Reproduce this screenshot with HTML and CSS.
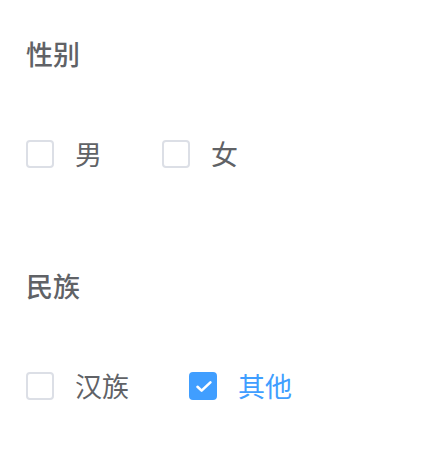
FILE: index.html
```html
<!DOCTYPE html>
<html lang="zh-CN">
<head>
    <meta charset="UTF-8">
    <meta name="viewport" content="width=device-width, initial-scale=1.0">
    <title>表单</title>
    <link rel="stylesheet" href="styles.css">
</head>
<body>
    <div class="form">
        <!-- 性别 -->
        <div class="field">
            <div class="field-title">性别</div>
            <div class="checkbox-group">
                <label class="checkbox">
                    <span class="checkbox-box"></span>
                    <span class="checkbox-label">男</span>
                </label>
                <label class="checkbox">
                    <span class="checkbox-box"></span>
                    <span class="checkbox-label">女</span>
                </label>
            </div>
        </div>

        <!-- 民族 -->
        <div class="field">
            <div class="field-title">民族</div>
            <div class="checkbox-group">
                <label class="checkbox">
                    <span class="checkbox-box"></span>
                    <span class="checkbox-label">汉族</span>
                </label>
                <label class="checkbox is-checked">
                    <span class="checkbox-box">
                        <svg viewBox="0 0 28 28" width="28" height="28">
                            <path d="M8.5 14.8 L12.6 18.6 L21.4 10.4" fill="none" stroke="#fff" stroke-width="2.6" stroke-linecap="round" stroke-linejoin="round"/>
                        </svg>
                    </span>
                    <span class="checkbox-label">其他</span>
                </label>
            </div>
        </div>
    </div>
</body>
</html>
```

FILE: styles.css
```css
* {
    margin: 0;
    padding: 0;
    box-sizing: border-box;
}

body {
    font-family: "Noto Sans CJK SC", "Noto Sans", sans-serif;
    background-color: #fff;
    color: #606266;
}

.form {
    padding: 34px 26px 0;
}

.field {
    margin-bottom: 92px;
}

.field:last-child {
    margin-bottom: 0;
}

.field-title {
    font-size: 27px;
    font-weight: 500;
    height: 40px;
    line-height: 40px;
    margin-bottom: 60px;
}

.checkbox-group {
    display: flex;
    align-items: center;
    height: 40px;
}

.checkbox {
    display: flex;
    align-items: center;
    margin-right: 60px;
    cursor: pointer;
}

.checkbox-box {
    width: 28px;
    height: 28px;
    border: 2px solid #dcdfe6;
    border-radius: 4px;
    background-color: #fff;
    position: relative;
}

.checkbox-box svg {
    position: absolute;
    top: -2px;
    left: -2px;
    display: block;
}

.checkbox-label {
    font-size: 27px;
    line-height: 40px;
    padding-left: 21px;
}

.checkbox.is-checked .checkbox-box {
    background-color: #409eff;
    border-color: #409eff;
}

.checkbox.is-checked .checkbox-label {
    color: #409eff;
}
```
